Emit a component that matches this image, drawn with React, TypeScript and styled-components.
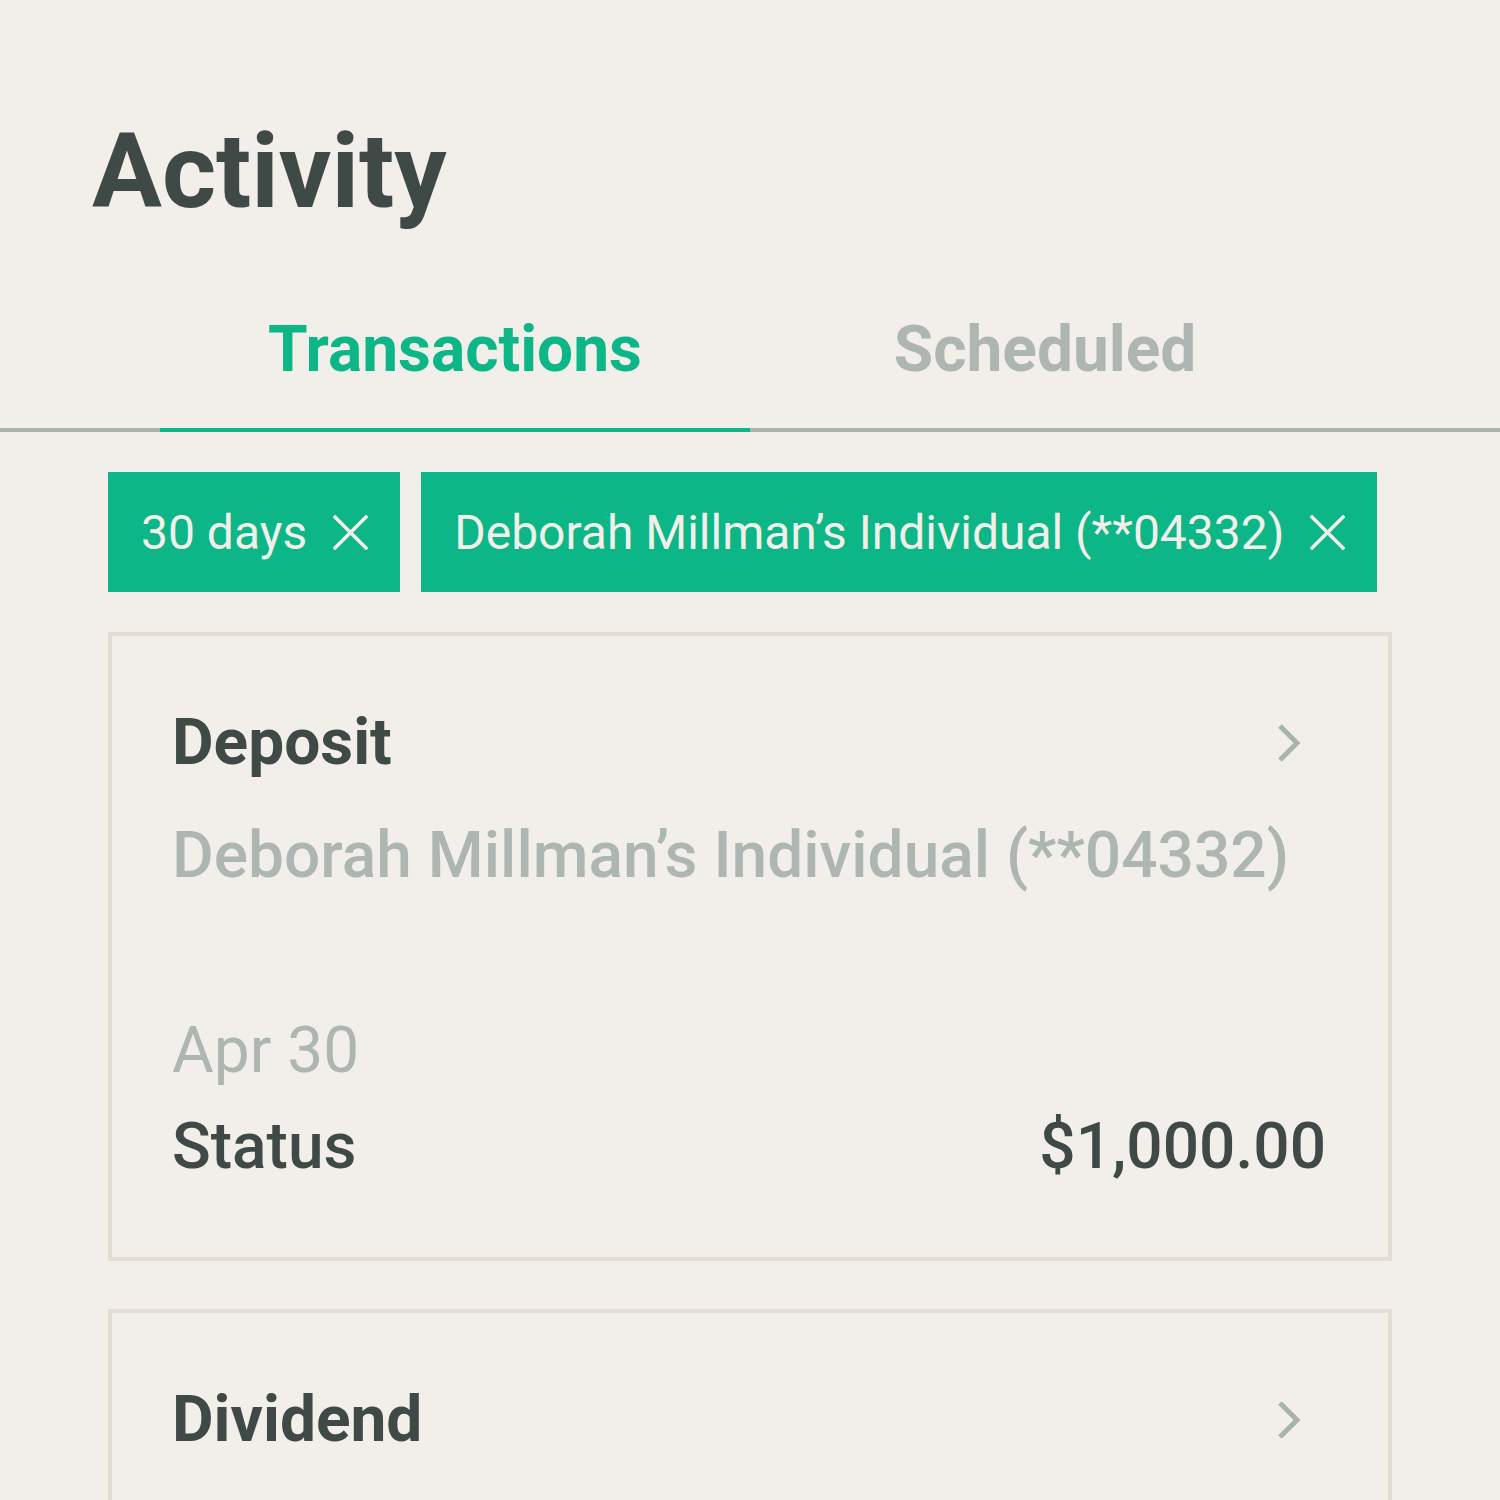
import { createGlobalStyle, styled } from "styled-components";

const GlobalStyle = createGlobalStyle`
  html, body {
    margin: 0;
    padding: 0;
    background: #f2efea;
  }
  body {
    font-family: Roboto, "Noto Sans", Arial, sans-serif;
    color: #3f4a47;
  }
`;

const transactions = [
  {
    type: "Deposit",
    account: "Deborah Millman’s Individual (**04332)",
    date: "Apr 30",
    status: "Status",
    amount: "$1,000.00",
  },
  {
    type: "Dividend",
    account: "Deborah Millman’s Individual (**04332)",
    date: "Apr 28",
    status: "Status",
    amount: "$12.40",
  },
];

const filters = ["30 days", "Deborah Millman’s Individual (**04332)"];

const CloseIcon = () => (
  <svg width="35" height="35" viewBox="0 0 35 35" fill="none">
    <path
      d="M2 2 L33 33 M33 2 L2 33"
      stroke="#f2efea"
      strokeWidth="3.5"
      strokeLinecap="square"
    />
  </svg>
);

const ChevronIcon = () => (
  <svg width="28" height="40" viewBox="0 0 28 40" fill="none">
    <path
      d="M4 3 L21 20 L4 37"
      stroke="#a9b3ae"
      strokeWidth="5"
      strokeLinejoin="miter"
    />
  </svg>
);

const App = () => {
  return (
    <Page>
      <GlobalStyle />
      <Title>Activity</Title>
      <TabBar>
        <Tab $active>Transactions</Tab>
        <Tab>Scheduled</Tab>
      </TabBar>
      <Content>
        <Chips>
          {filters.map((f) => (
            <Chip key={f}>
              <span>{f}</span>
              <CloseIcon />
            </Chip>
          ))}
        </Chips>
        {transactions.map((t) => (
          <Card key={t.type}>
            <CardHead>
              <CardTitle>{t.type}</CardTitle>
              <ChevronIcon />
            </CardHead>
            <Account>{t.account}</Account>
            <Meta>
              <DateText>{t.date}</DateText>
              <Bottom>
                <span>{t.status}</span>
                <span>{t.amount}</span>
              </Bottom>
            </Meta>
          </Card>
        ))}
      </Content>
    </Page>
  );
};

export default App;

const Page = styled.div`
  padding-top: 109px;
`;

const Title = styled.h1`
  margin: 0 0 67px 92px;
  font-size: 104px;
  line-height: 126px;
  font-weight: 700;
  color: #3f4a47;
`;

const TabBar = styled.div`
  display: grid;
  grid-template-columns: 1fr 1fr;
  padding: 0 160px;
  border-bottom: 4px solid #abb3ae;
`;

const Tab = styled.div<{ $active?: boolean }>`
  text-align: center;
  font-size: 64px;
  line-height: 96px;
  font-weight: 700;
  padding-bottom: 30px;
  margin-bottom: -4px;
  color: ${(p) => (p.$active ? "#0cb686" : "#adb6b1")};
  border-bottom: 4px solid ${(p) => (p.$active ? "#0cb686" : "transparent")};
`;

const Content = styled.div`
  padding: 40px 108px 0;
  display: flex;
  flex-direction: column;
  gap: 40px;
`;

const Chips = styled.div`
  display: flex;
  gap: 21px;
`;

const Chip = styled.div`
  display: flex;
  flex: none;
  align-items: center;
  gap: 26px;
  height: 120px;
  padding: 0 32px 0 33px;
  background: #0cb686;
  color: #f2efea;
  font-size: 48px;
  font-weight: 400;
  white-space: nowrap;
  box-sizing: border-box;
`;

const Card = styled.div`
  border: 4px solid #e4ddd4;
  padding: 59px 62px 62px 60px;
  & + & {
    margin-top: 8px;
  }
`;

const CardHead = styled.div`
  display: flex;
  align-items: center;
  justify-content: space-between;
  padding-right: 22px;
`;

const CardTitle = styled.div`
  font-size: 64px;
  line-height: 96px;
  font-weight: 700;
  color: #3f4a47;
`;

const Account = styled.div`
  margin-top: 17px;
  font-size: 64px;
  line-height: 96px;
  font-weight: 500;
  color: #adb6b1;
`;

const Meta = styled.div`
  margin-top: 99px;
`;

const DateText = styled.div`
  font-size: 64px;
  line-height: 96px;
  font-weight: 400;
  color: #adb6b1;
`;

const Bottom = styled.div`
  display: flex;
  justify-content: space-between;
  font-size: 64px;
  line-height: 96px;
  font-weight: 500;
  color: #3f4a47;
`;
